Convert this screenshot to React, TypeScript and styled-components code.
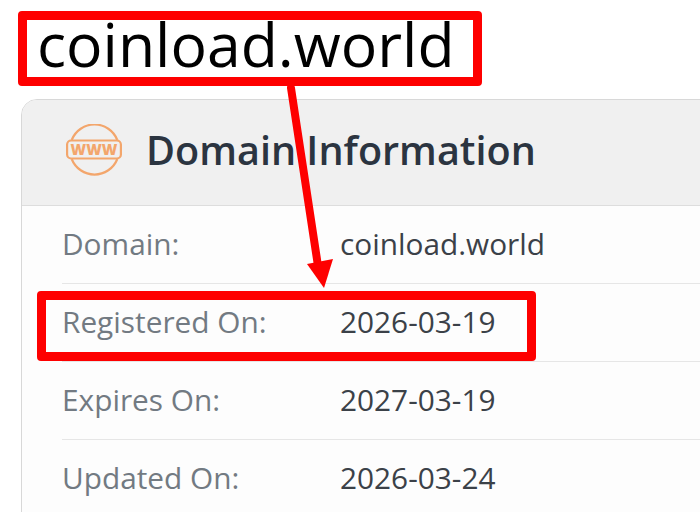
import React from 'react'
import styled, { createGlobalStyle } from 'styled-components'

const GlobalStyle = createGlobalStyle`
  html, body {
    margin: 0;
    padding: 0;
    background: #fff;
    overflow: hidden;
  }
`

const Page = styled.div`
  position: relative;
  width: 700px;
  height: 512px;
  overflow: hidden;
  background: #fff;
  font-family: 'Open Sans', 'Noto Sans', sans-serif;
`

const SiteName = styled.div`
  height: 99px;
  padding-left: 37px;
  box-sizing: border-box;
  font-size: 60.7px;
  line-height: 87px;
  color: #000;
`

const Card = styled.section`
  margin-left: 21px;
  width: 720px;
  border: 1px solid #d8d8d8;
  border-radius: 16px;
  background: #fdfdfd;
  overflow: hidden;
`

const CardHeader = styled.header`
  display: flex;
  align-items: center;
  gap: 23px;
  height: 106px;
  padding: 0 0 6px 43px;
  box-sizing: border-box;
  background: #f0f0f0;
  border-bottom: 1px solid #ddd;
`

const CardTitle = styled.h2`
  margin: 0;
  font-size: 39.6px;
  font-weight: 600;
  color: #2b3440;
`

const Rows = styled.div`
  padding: 0 0 40px 40px;
`

const Row = styled.div`
  display: grid;
  grid-template-columns: 278px 1fr;
  align-items: center;
  height: 75px;
  padding-bottom: 2px;
  border-bottom: 1px solid #e6e6e6;
  font-size: 29.8px;
`

const Label = styled.span`
  color: #727a82;
`

const Value = styled.span`
  color: #3b4148;
`

const Highlight = styled.div<{ $left: number; $top: number; $width: number; $height: number }>`
  position: absolute;
  left: ${(p) => p.$left}px;
  top: ${(p) => p.$top}px;
  width: ${(p) => p.$width}px;
  height: ${(p) => p.$height}px;
  box-sizing: border-box;
  border: 9px solid #fe0000;
  border-radius: 4px;
`

const Arrow = styled.svg`
  position: absolute;
  left: 0;
  top: 0;
`

const IconText = styled.text`
  font-family: 'Open Sans', sans-serif;
  font-size: 15px;
  font-weight: 800;
  fill: #f3a66c;
  stroke: none;
`

const WwwIcon = () => (
  <svg width="58" height="52" viewBox="0 0 58 52" fill="none" stroke="#f3a66c" strokeWidth="2.2">
    <path d="M6.7 16 A24.5 24.5 0 0 1 52.3 16" />
    <path d="M6.7 35 A24.5 24.5 0 0 0 52.3 35" />
    <rect x="2.1" y="16.5" width="53.8" height="18" rx="4" />
    <IconText x="29" y="31" textAnchor="middle">
      WWW
    </IconText>
  </svg>
)

const rows = [
  ['Domain:', 'coinload.world'],
  ['Registered On:', '2026-03-19'],
  ['Expires On:', '2027-03-19'],
  ['Updated On:', '2026-03-24'],
]

export default function App() {
  return (
    <Page>
      <GlobalStyle />
      <SiteName>coinload.world</SiteName>
      <Card>
        <CardHeader>
          <WwwIcon />
          <CardTitle>Domain Information</CardTitle>
        </CardHeader>
        <Rows>
          {rows.map(([label, value]) => (
            <Row key={label}>
              <Label>{label}</Label>
              <Value>{value}</Value>
            </Row>
          ))}
        </Rows>
      </Card>
      <Highlight $left={18} $top={11} $width={464} $height={75} />
      <Highlight $left={37} $top={291} $width={499} $height={70} />
      <Arrow width="700" height="512">
        <line x1="291" y1="88" x2="318" y2="266" stroke="#fe0000" strokeWidth="8" strokeLinecap="round" />
        <polygon points="307,264 333,259 324,288" fill="#fe0000" />
      </Arrow>
    </Page>
  )
}
